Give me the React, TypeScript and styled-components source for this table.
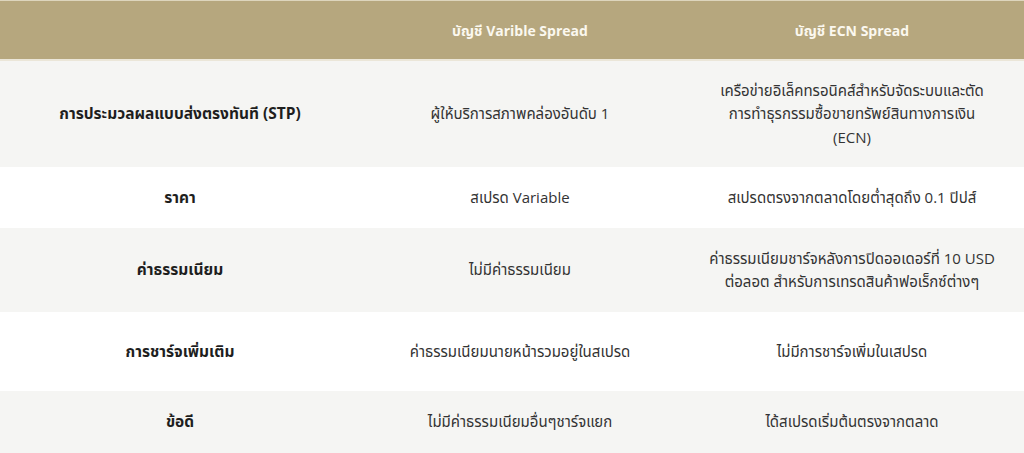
import React from 'react';
import styled, { createGlobalStyle } from 'styled-components';

const GlobalStyle = createGlobalStyle`
  html, body {
    margin: 0;
    padding: 0;
    background: #ffffff;
  }
  body {
    font-family: 'Open Sans', 'Noto Sans', 'Noto Sans Thai', sans-serif;
  }
`

const Table = styled.div`
  width: 1024px;
  display: flex;
  flex-direction: column;
`

const HeaderRow = styled.div`
  display: grid;
  grid-template-columns: 360px 320px 344px;
  height: 58px;
  background-color: #b6a77e;
  border-top: 1px solid #ddd5bd;
  border-bottom: 2px solid #ebe6d8;
  align-items: center;
`

const HeaderCell = styled.div`
  text-align: center;
  color: #fbf8ef;
  font-size: 14px;
  font-weight: 700;
  padding-top: 2px;
`

const Row = styled.div<{ $h: number; $shade: boolean }>`
  display: grid;
  grid-template-columns: 360px 320px 344px;
  min-height: ${p => p.$h}px;
  background-color: ${p => (p.$shade ? '#f5f5f3' : '#ffffff')};
  align-items: center;
`

const Cell = styled.div<{ $bold?: boolean }>`
  text-align: center;
  font-size: ${p => (p.$bold ? 15.5 : 15)}px;
  line-height: 23.5px;
  color: ${p => (p.$bold ? '#1e1e1e' : '#333333')};
  font-weight: ${p => (p.$bold ? 700 : 400)};
  padding: 0 8px;
`

const Line = styled.span`
  display: block;
  white-space: nowrap;
`

const rows = [
  {
    label: 'การประมวลผลแบบส่งตรงทันที (STP)',
    variable: 'ผู้ให้บริการสภาพคล่องอันดับ 1',
    ecn: ['เครือข่ายอิเล็คทรอนิคส์สำหรับจัดระบบและตัด', 'การทำธุรกรรมซื้อขายทรัพย์สินทางการเงิน', '(ECN)'],
    h: 106,
  },
  {
    label: 'ราคา',
    variable: 'สเปรด Variable',
    ecn: ['สเปรดตรงจากตลาดโดยต่ำสุดถึง 0.1 ปิปส์'],
    h: 61,
  },
  {
    label: 'ค่าธรรมเนียม',
    variable: 'ไม่มีค่าธรรมเนียม',
    ecn: ['ค่าธรรมเนียมชาร์จหลังการปิดออเดอร์ที่ 10 USD', 'ต่อลอต สำหรับการเทรดสินค้าฟอเร็กซ์ต่างๆ'],
    h: 84,
  },
  {
    label: 'การชาร์จเพิ่มเติม',
    variable: 'ค่าธรรมเนียมนายหน้ารวมอยู่ในสเปรด',
    ecn: ['ไม่มีการชาร์จเพิ่มในเสปรด'],
    h: 79,
  },
  {
    label: 'ข้อดี',
    variable: 'ไม่มีค่าธรรมเนียมอื่นๆชาร์จแยก',
    ecn: ['ได้สเปรดเริ่มต้นตรงจากตลาด'],
    h: 62,
  },
]

function App() {
  return (
    <>
      <GlobalStyle />
      <Table>
        <HeaderRow>
          <HeaderCell />
          <HeaderCell>บัญชี Varible Spread</HeaderCell>
          <HeaderCell>บัญชี ECN Spread</HeaderCell>
        </HeaderRow>
        {rows.map((r, i) => (
          <Row key={r.label} $h={r.h} $shade={i % 2 === 0}>
            <Cell $bold>{r.label}</Cell>
            <Cell>{r.variable}</Cell>
            <Cell>
              {r.ecn.map(line => (
                <Line key={line}>{line}</Line>
              ))}
            </Cell>
          </Row>
        ))}
      </Table>
    </>
  );
}

export default App;
